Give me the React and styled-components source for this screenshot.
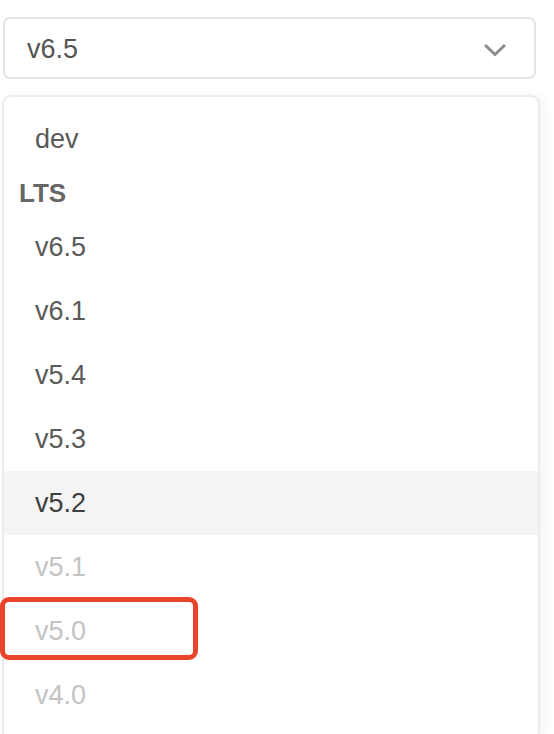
import React from "react";
import styled, { createGlobalStyle } from "styled-components";

const GlobalStyle = createGlobalStyle`
  html, body {
    margin: 0;
    padding: 0;
    background: #fff;
    overflow: hidden;
  }
  body {
    font-family: "Liberation Sans", Arial, sans-serif;
  }
`;

const Page = styled.div`
  padding: 17px 0 0 3px;
  width: 540px;
`;

const Select = styled.div`
  box-sizing: border-box;
  width: 533px;
  height: 62px;
  display: flex;
  align-items: center;
  justify-content: space-between;
  padding: 3px 27px 0 22px;
  border: 2px solid #e4e4e4;
  border-radius: 7px;
  color: #555;
  font-size: 27px;
`;

const Chevron = () => (
  <svg width="24" height="14" viewBox="0 0 24 14">
    <polyline
      points="2,2 12,11.5 22,2"
      fill="none"
      stroke="#8c8c8c"
      strokeWidth="3"
    />
  </svg>
);

const Panel = styled.div`
  box-sizing: border-box;
  width: 538px;
  margin: 16px 0 0 -1px;
  padding: 10px 0 12px;
  border: 2px solid #ececec;
  border-radius: 9px;
  box-shadow: 4px 2px 12px rgba(0, 0, 0, 0.05);
  background: #fff;
`;

const Item = styled.div`
  position: relative;
  height: 64px;
  display: flex;
  align-items: center;
  padding-left: 31px;
  font-size: 27px;
  color: ${(p) => (p.disabled ? "#c3c3c3" : p.active ? "#3f3f3f" : "#5a5a5a")};
  background: ${(p) => (p.active ? "#f4f4f4" : "transparent")};

  ${(p) =>
    p.marked &&
    `
    &::after {
      content: "";
      position: absolute;
      left: -4px;
      top: -2px;
      width: 198px;
      height: 63px;
      box-sizing: border-box;
      border: 5px solid #e9432c;
      border-radius: 9px;
    }
  `}
`;

const Group = styled.div`
  height: 44px;
  display: flex;
  align-items: center;
  padding-left: 15px;
  font-size: 26px;
  font-weight: 700;
  color: #666;
`;

const versions = [
  { label: "v6.5" },
  { label: "v6.1" },
  { label: "v5.4" },
  { label: "v5.3" },
  { label: "v5.2", active: true },
  { label: "v5.1", disabled: true },
  { label: "v5.0", disabled: true, marked: true },
  { label: "v4.0", disabled: true },
];

const App = () => (
  <>
    <GlobalStyle />
    <Page>
      <Select>
        <span>v6.5</span>
        <Chevron />
      </Select>
      <Panel>
        <Item>dev</Item>
        <Group>LTS</Group>
        {versions.map((v) => (
          <Item
            key={v.label}
            active={v.active}
            disabled={v.disabled}
            marked={v.marked}
          >
            {v.label}
          </Item>
        ))}
      </Panel>
    </Page>
  </>
);

export default App;
